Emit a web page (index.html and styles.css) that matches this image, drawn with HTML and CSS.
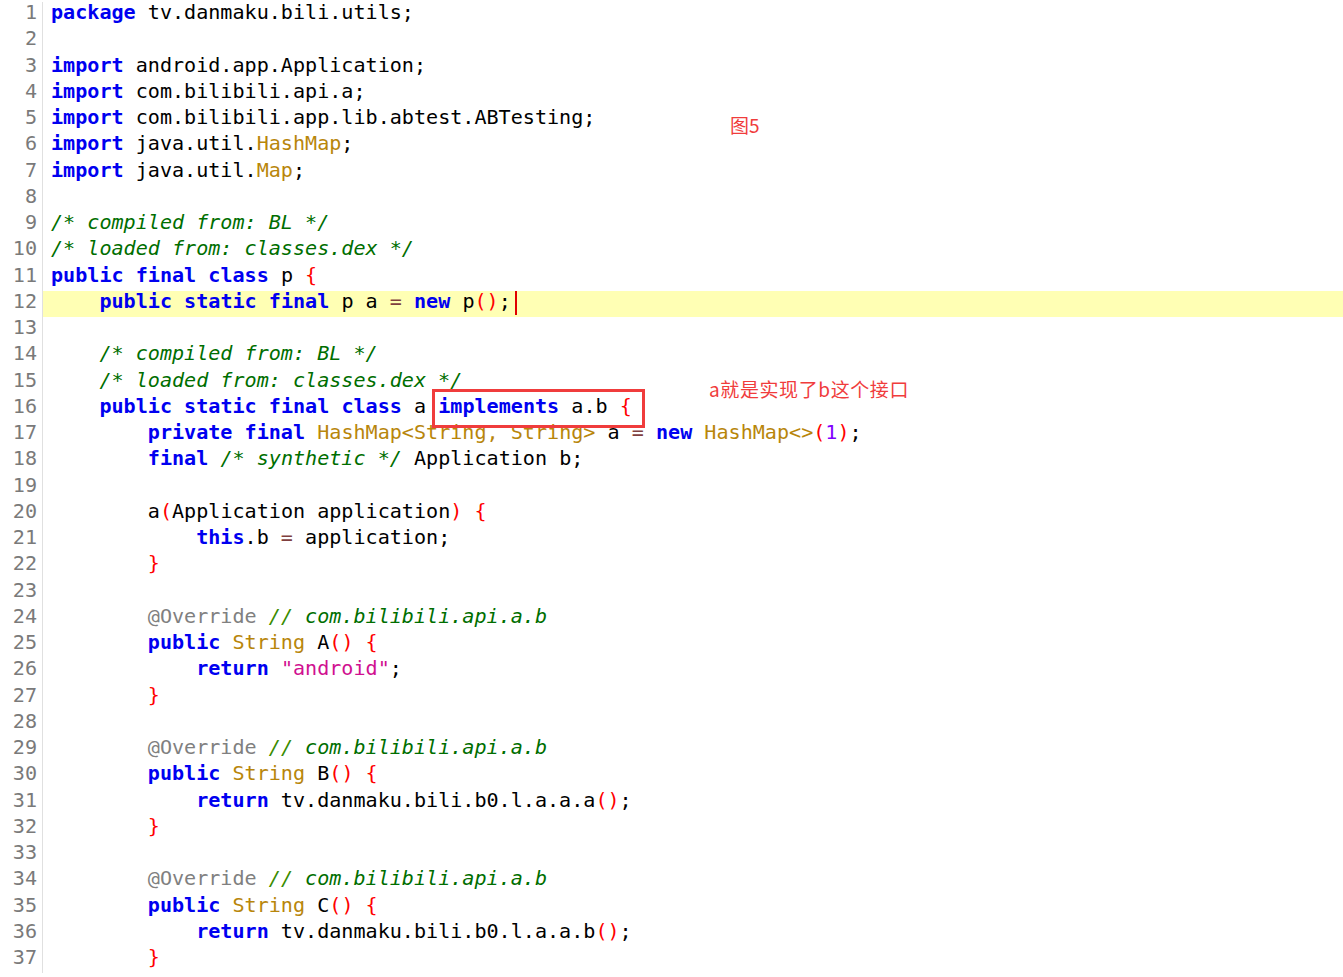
FILE: index.html
```html
<!DOCTYPE html>
<html lang="en">
<head>
  <meta charset="UTF-8" />
  <meta name="viewport" content="width=device-width, initial-scale=1" />
  <title>p.java</title>
  <link rel="stylesheet" href="styles.css">
</head>
<body>
  <div class="editor">
    <div class="gutter">
      <div class="num">1</div><div class="num">2</div><div class="num">3</div><div class="num">4</div>
      <div class="num">5</div><div class="num">6</div><div class="num">7</div><div class="num">8</div>
      <div class="num">9</div><div class="num">10</div><div class="num">11</div><div class="num">12</div>
      <div class="num">13</div><div class="num">14</div><div class="num">15</div><div class="num">16</div>
      <div class="num">17</div><div class="num">18</div><div class="num">19</div><div class="num">20</div>
      <div class="num">21</div><div class="num">22</div><div class="num">23</div><div class="num">24</div>
      <div class="num">25</div><div class="num">26</div><div class="num">27</div><div class="num">28</div>
      <div class="num">29</div><div class="num">30</div><div class="num">31</div><div class="num">32</div>
      <div class="num">33</div><div class="num">34</div><div class="num">35</div><div class="num">36</div>
      <div class="num">37</div>
    </div>
    <div class="code">
<div class="line"><span class="kw">package</span> tv.danmaku.bili.utils;</div>
<div class="line"></div>
<div class="line"><span class="kw">import</span> android.app.Application;</div>
<div class="line"><span class="kw">import</span> com.bilibili.api.a;</div>
<div class="line"><span class="kw">import</span> com.bilibili.app.lib.abtest.ABTesting;</div>
<div class="line"><span class="kw">import</span> java.util.<span class="ty">HashMap</span>;</div>
<div class="line"><span class="kw">import</span> java.util.<span class="ty">Map</span>;</div>
<div class="line"></div>
<div class="line"><span class="cm">/* compiled from: BL */</span></div>
<div class="line"><span class="cm">/* loaded from: classes.dex */</span></div>
<div class="line"><span class="kw">public</span> <span class="kw">final</span> <span class="kw">class</span> p <span class="br">{</span></div>
<div class="line current">    <span class="kw">public</span> <span class="kw">static</span> <span class="kw">final</span> p a <span class="op">=</span> <span class="kw">new</span> p<span class="br">()</span>;<span class="caret"></span></div>
<div class="line"></div>
<div class="line">    <span class="cm">/* compiled from: BL */</span></div>
<div class="line">    <span class="cm">/* loaded from: classes.dex */</span></div>
<div class="line">    <span class="kw">public</span> <span class="kw">static</span> <span class="kw">final</span> <span class="kw">class</span> a <span class="kw">implements</span> a.b <span class="br">{</span></div>
<div class="line">        <span class="kw">private</span> <span class="kw">final</span> <span class="ty">HashMap&lt;String, String&gt;</span> a <span class="op">=</span> <span class="kw">new</span> <span class="ty">HashMap&lt;&gt;</span><span class="br">(</span><span class="nu">1</span><span class="br">)</span>;</div>
<div class="line">        <span class="kw">final</span> <span class="cm">/* synthetic */</span> Application b;</div>
<div class="line"></div>
<div class="line">        a<span class="br">(</span>Application application<span class="br">)</span> <span class="br">{</span></div>
<div class="line">            <span class="kw">this</span>.b <span class="op">=</span> application;</div>
<div class="line">        <span class="br">}</span></div>
<div class="line"></div>
<div class="line">        <span class="an">@Override</span> <span class="sl">//</span> <span class="cm">com.bilibili.api.a.b</span></div>
<div class="line">        <span class="kw">public</span> <span class="ty">String</span> A<span class="br">()</span> <span class="br">{</span></div>
<div class="line">            <span class="kw">return</span> <span class="st">"android"</span>;</div>
<div class="line">        <span class="br">}</span></div>
<div class="line"></div>
<div class="line">        <span class="an">@Override</span> <span class="sl">//</span> <span class="cm">com.bilibili.api.a.b</span></div>
<div class="line">        <span class="kw">public</span> <span class="ty">String</span> B<span class="br">()</span> <span class="br">{</span></div>
<div class="line">            <span class="kw">return</span> tv.danmaku.bili.b0.l.a.a.a<span class="br">()</span>;</div>
<div class="line">        <span class="br">}</span></div>
<div class="line"></div>
<div class="line">        <span class="an">@Override</span> <span class="sl">//</span> <span class="cm">com.bilibili.api.a.b</span></div>
<div class="line">        <span class="kw">public</span> <span class="ty">String</span> C<span class="br">()</span> <span class="br">{</span></div>
<div class="line">            <span class="kw">return</span> tv.danmaku.bili.b0.l.a.a.b<span class="br">()</span>;</div>
<div class="line">        <span class="br">}</span></div>
    </div>
  </div>

  <div class="note fig">图5</div>
  <div class="note remark">a就是实现了b这个接口</div>
  <div class="mark"></div>
</body>
</html>
```

FILE: styles.css
```css
body {
  margin: 0;
  padding-top: 2px;
  background-color: #fff;
  position: relative;
}
.editor {
  display: flex;
  font-family: "DejaVu Sans Mono", "Liberation Mono", monospace;
  font-size: 20.1px;
  line-height: 21px;
}
.gutter {
  width: 37px;
  padding-right: 5px;
  border-right: 1px solid #e0e0e0;
  text-align: right;
  color: #7a7a7a;
  flex-shrink: 0;
}
.num,
.line {
  box-sizing: border-box;
  height: 26.25px;
  padding-bottom: 5.25px;
}
.code {
  flex: 1;
  color: #000;
}
.line {
  white-space: pre;
  padding-left: 8px;
}
.line.current {
  background-color: #ffffb4;
}
.caret {
  display: inline-block;
  width: 2px;
  height: 24px;
  margin-left: 4px;
  vertical-align: -7px;
  background-color: #e00000;
}
.kw {
  color: #0000f0;
  font-weight: bold;
}
.ty {
  color: #b8860b;
}
.cm {
  color: #006e00;
  font-style: italic;
}
.sl {
  color: #3a8c00;
  font-style: italic;
}
.br {
  color: #ff0000;
}
.op {
  color: #7f3f3f;
}
.an {
  color: #808080;
}
.st {
  color: #d01090;
}
.nu {
  color: #8000ff;
}
.note {
  position: absolute;
  font-family: "Noto Sans CJK SC", sans-serif;
  font-size: 19px;
  line-height: 24px;
  color: #f03c3c;
  white-space: nowrap;
}
.fig {
  left: 730px;
  top: 113px;
}
.remark {
  left: 709px;
  top: 377px;
  letter-spacing: 0.6px;
}
.mark {
  position: absolute;
  left: 432px;
  top: 389px;
  width: 207px;
  height: 33px;
  border: 3px solid #f03c3c;
}
```
